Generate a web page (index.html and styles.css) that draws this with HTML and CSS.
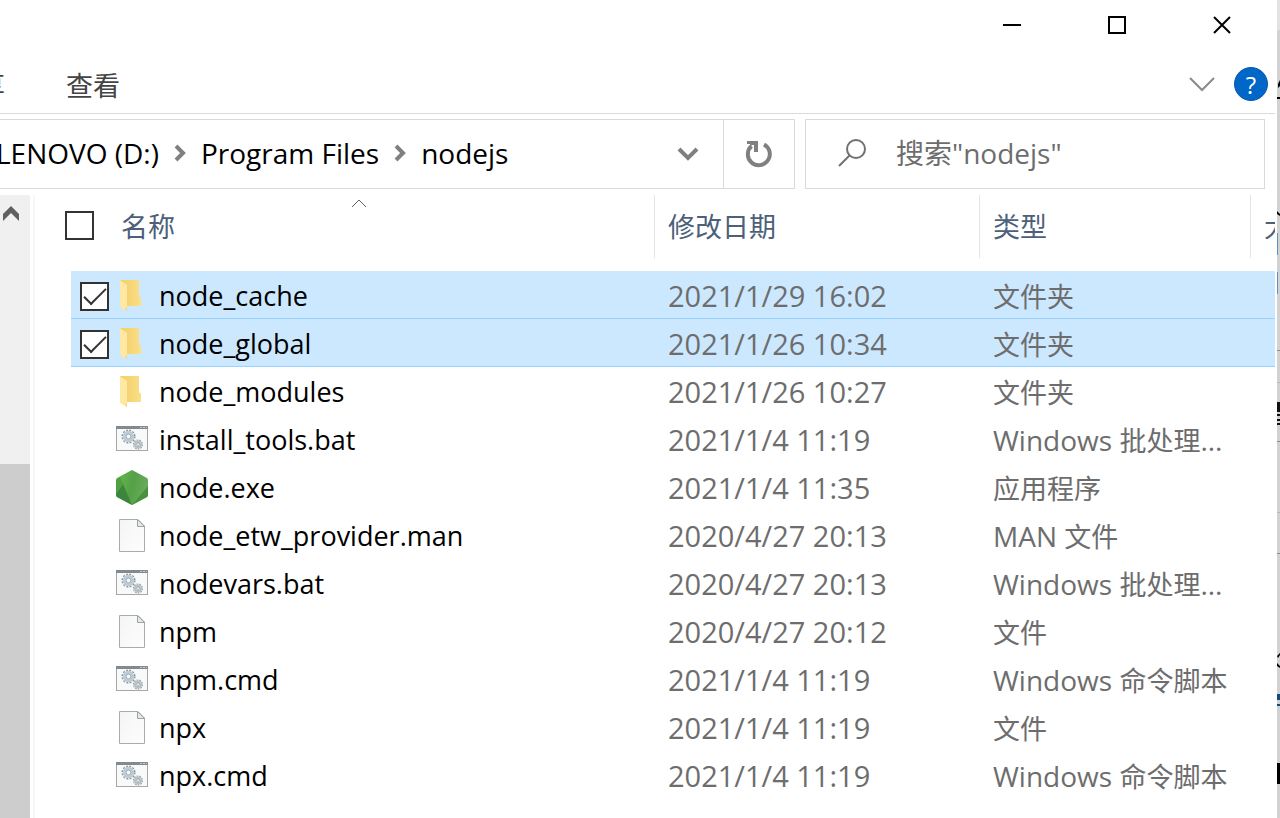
FILE: index.html
```
<!DOCTYPE html>
<html lang="zh-CN">
<head>
    <meta charset="UTF-8">
    <meta name="viewport" content="width=device-width, initial-scale=1.0">
    <title>nodejs</title>
    <link rel="stylesheet" href="styles.css">
</head>
<body>
    <!-- Shared icons -->
    <svg class="icon-defs" width="0" height="0" aria-hidden="true">
        <defs>
            <linearGradient id="folder-fill" x1="0" x2="1">
                <stop offset="0" stop-color="#f0cd69"/>
                <stop offset="1" stop-color="#fbdf85"/>
            </linearGradient>
            <linearGradient id="node-fill" x1="0" x2="1" y1="0.3" y2="0.6">
                <stop offset="0" stop-color="#66b848"/>
                <stop offset="0.5" stop-color="#55a048"/>
                <stop offset="1" stop-color="#6cad5c"/>
            </linearGradient>
            <linearGradient id="page-fill" x1="0" x2="1" y1="0" y2="1">
                <stop offset="0" stop-color="#f4f5f6"/>
                <stop offset="1" stop-color="#fdfdfd"/>
            </linearGradient>
        </defs>
        <symbol id="folder" viewBox="0 0 34 36">
            <path d="M5 2H24V18L26 20V28H5Z" fill="url(#folder-fill)"/>
            <path d="M5 2L12 7V33L5 29Z" fill="#ffe9a2"/>
            <path d="M12 28V33L10 32Z" fill="#f5d67c"/>
        </symbol>
        <symbol id="script" viewBox="0 0 34 36">
            <rect x="1.500" y="4.500" width="31" height="24" fill="#f8f9f9" stroke="#a3a7aa"/>
            <path d="M1 4H33V7H1Z" fill="#85898c"/>
            <path d="M25 5.500H32" stroke="#c9cccd" stroke-dasharray="2 1"/>
            <circle cx="13.500" cy="14.500" r="6.300" fill="none" stroke="#8b9aa5" stroke-width="1.500" stroke-dasharray="1.900 1.400"/>
            <circle cx="13.500" cy="14.500" r="4" fill="#f8f9f9" stroke="#bfccd5" stroke-width="3.400"/>
            <circle cx="13.500" cy="14.500" r="2.300" fill="#f8f9f9" stroke="#92a0aa" stroke-width="0.800"/>
            <circle cx="23" cy="22.500" r="4.400" fill="none" stroke="#8b979f" stroke-width="1.200" stroke-dasharray="1.500 1.200"/>
            <circle cx="23" cy="22.500" r="2.800" fill="#f8f9f9" stroke="#b6c1c8" stroke-width="2.400"/>
            <circle cx="23" cy="22.500" r="1.300" fill="#f8f9f9" stroke="#92a0aa" stroke-width="0.700"/>
        </symbol>
        <symbol id="node" viewBox="0 0 34 36">
            <path d="M17 0L32 8Q33 9 33 10V25Q33 26 32 27L17 35L2 27Q1 26 1 25V10Q1 9 2 8Z" fill="url(#node-fill)"/>
            <path d="M1 24L8 14L17 35L2 27Q1 26 1 25Z" fill="#3c853d"/>
            <path d="M5 7L1 10V24L8 14Z" fill="#4f9f45"/>
            <path d="M17 35L33 16V25Q33 26 32 27Z" fill="#48923f"/>
        </symbol>
        <symbol id="page" viewBox="0 0 34 36">
            <path d="M4.500 1.500H23L29.500 8V33.500H4.500Z" fill="url(#page-fill)" stroke="#a9abad"/>
            <path d="M22.500 1.500V8.500H29.500Z" fill="#e6e8e9" stroke="#a0a2a4"/>
        </symbol>
    </svg>

    <div class="desktop">
        <main class="window">
            <header class="titlebar">
                <button type="button" aria-label="最小化">
                    <svg width="20" height="20" viewBox="0 0 20 20"><path d="M1 10H19" stroke="#000" stroke-width="2"/></svg>
                </button>
                <button type="button" aria-label="最大化">
                    <svg width="20" height="20" viewBox="0 0 20 20"><rect x="2" y="2" width="16" height="16" fill="none" stroke="#000" stroke-width="2"/></svg>
                </button>
                <button type="button" aria-label="关闭">
                    <svg width="20" height="20" viewBox="0 0 20 20"><path d="M2 2L18 18M18 2L2 18" stroke="#000" stroke-width="2"/></svg>
                </button>
            </header>

            <nav class="ribbon">
                <a class="tab" href="#">共享</a>
                <a class="tab" href="#">查看</a>
                <button type="button" class="expand" aria-label="展开功能区">
                    <svg width="26" height="16" viewBox="0 0 26 16"><path d="M1 2L13 14L25 2" fill="none" stroke="#8a8a8a" stroke-width="2"/></svg>
                </button>
                <button type="button" class="help" aria-label="帮助">?</button>
            </nav>

            <div class="location">
                <div class="address">
                    <div class="crumbs">
                        <a href="#">LENOVO (D:)</a>
                        <svg width="12" height="18" viewBox="0 0 12 18"><path d="M2 2L9 9L2 16" fill="none" stroke="#808080" stroke-width="4"/></svg>
                        <a href="#">Program Files</a>
                        <svg width="12" height="18" viewBox="0 0 12 18"><path d="M2 2L9 9L2 16" fill="none" stroke="#808080" stroke-width="4"/></svg>
                        <a href="#">nodejs</a>
                    </div>
                    <button type="button" class="history" aria-label="以前的位置">
                        <svg width="22" height="16" viewBox="0 0 22 16"><path d="M2 3L11 12L20 3" fill="none" stroke="#808080" stroke-width="4"/></svg>
                    </button>
                    <button type="button" class="refresh" aria-label="刷新">
                        <svg width="28" height="28" viewBox="0 0 28 28">
                            <path d="M19 4.500A11 11 0 1 1 6.500 6" fill="none" stroke="#808080" stroke-width="4"/>
                            <path d="M2 1H13V12H9V5H7L5 7V4H2Z" fill="#808080"/>
                        </svg>
                    </button>
                </div>
                <label class="search">
                    <svg width="30" height="30" viewBox="0 0 30 30"><circle cx="19" cy="11" r="9" fill="none" stroke="#707070" stroke-width="2"/><path d="M13 17L2 28" stroke="#707070" stroke-width="2"/></svg>
                    <input type="text" placeholder='搜索"nodejs"' aria-label="搜索">
                </label>
            </div>

            <div class="content">
                <div class="scrollbar">
                    <svg width="20" height="16" viewBox="0 0 20 16"><path d="M10 0L18 8V15L10 7L2 15V8Z" fill="#606060"/></svg>
                    <div class="thumb"></div>
                </div>
                <div class="files">
                    <table>
                        <colgroup>
                            <col class="col-name">
                            <col class="col-date">
                            <col class="col-type">
                            <col>
                        </colgroup>
                        <thead>
                            <tr>
                                <th>
                                    <div class="head head-name">
                                        <input type="checkbox" aria-label="全选">
                                        <span>名称</span>
                                        <svg class="sort" width="16" height="9" viewBox="0 0 16 9"><path d="M1 8L8 1L15 8" fill="none" stroke="#606060"/></svg>
                                    </div>
                                </th>
                                <th><div class="head">修改日期</div></th>
                                <th><div class="head">类型</div></th>
                                <th><div class="head">大小</div></th>
                            </tr>
                        </thead>
                        <tbody>
                            <tr class="selected">
                                <td><label class="file"><input type="checkbox" checked><svg><use href="#folder"/></svg>node_cache</label></td>
                                <td class="date">2021/1/29 16:02</td>
                                <td><span class="zh">文件夹</span></td>
                                <td></td>
                            </tr>
                            <tr class="selected">
                                <td><label class="file"><input type="checkbox" checked><svg><use href="#folder"/></svg>node_global</label></td>
                                <td class="date">2021/1/26 10:34</td>
                                <td><span class="zh">文件夹</span></td>
                                <td></td>
                            </tr>
                            <tr>
                                <td><div class="file"><svg><use href="#folder"/></svg>node_modules</div></td>
                                <td class="date">2021/1/26 10:27</td>
                                <td><span class="zh">文件夹</span></td>
                                <td></td>
                            </tr>
                            <tr>
                                <td><div class="file"><svg><use href="#script"/></svg>install_tools.bat</div></td>
                                <td class="date">2021/1/4 11:19</td>
                                <td>Windows <span class="zh">批处理</span>...</td>
                                <td></td>
                            </tr>
                            <tr>
                                <td><div class="file"><svg><use href="#node"/></svg>node.exe</div></td>
                                <td class="date">2021/1/4 11:35</td>
                                <td><span class="zh">应用程序</span></td>
                                <td></td>
                            </tr>
                            <tr>
                                <td><div class="file"><svg><use href="#page"/></svg>node_etw_provider.man</div></td>
                                <td class="date">2020/4/27 20:13</td>
                                <td>MAN <span class="zh">文件</span></td>
                                <td></td>
                            </tr>
                            <tr>
                                <td><div class="file"><svg><use href="#script"/></svg>nodevars.bat</div></td>
                                <td class="date">2020/4/27 20:13</td>
                                <td>Windows <span class="zh">批处理</span>...</td>
                                <td></td>
                            </tr>
                            <tr>
                                <td><div class="file"><svg><use href="#page"/></svg>npm</div></td>
                                <td class="date">2020/4/27 20:12</td>
                                <td><span class="zh">文件</span></td>
                                <td></td>
                            </tr>
                            <tr>
                                <td><div class="file"><svg><use href="#script"/></svg>npm.cmd</div></td>
                                <td class="date">2021/1/4 11:19</td>
                                <td>Windows <span class="zh">命令脚本</span></td>
                                <td></td>
                            </tr>
                            <tr>
                                <td><div class="file"><svg><use href="#page"/></svg>npx</div></td>
                                <td class="date">2021/1/4 11:19</td>
                                <td><span class="zh">文件</span></td>
                                <td></td>
                            </tr>
                            <tr>
                                <td><div class="file"><svg><use href="#script"/></svg>npx.cmd</div></td>
                                <td class="date">2021/1/4 11:19</td>
                                <td>Windows <span class="zh">命令脚本</span></td>
                                <td></td>
                            </tr>
                        </tbody>
                    </table>
                </div>
            </div>
        </main>

        <!-- Edge of the window behind -->
        <svg class="behind" width="3" height="818" viewBox="0 0 3 818" aria-hidden="true">
            <path d="M0 0H3V30H0Z" fill="#e2e2e2"/>
            <path d="M1 84L3 80V86L1 88ZM0 97H3V99H0ZM0 211L3 214V216L0 214Z" fill="#000"/>
            <path d="M0 233H1V255H0ZM0 272H1V294H0Z" fill="#5b93c9"/>
            <path d="M0 350H3V351H0ZM0 441H3V442H0ZM0 553H3V554H0Z" fill="#8c8c8c"/>
            <path d="M0 382H3V383H0ZM0 512H3V513H0Z" fill="#b8b8b8"/>
            <path d="M0 402H3V412H0ZM0 414H3V416H0ZM0 419H3V421H0ZM0 423H3V425H0Z" fill="#111"/>
            <path d="M0 656L3 653V655L1 658ZM0 663L3 666V668L0 666Z" fill="#000"/>
            <path d="M0 694H3V700H0ZM0 704H3V706H0Z" fill="#174a7a"/>
            <path d="M0 763H3V784H0Z" fill="#000"/>
        </svg>
    </div>
</body>
</html>
```

FILE: styles.css
```
* {
    box-sizing: border-box;
}
body {
    margin: 0;
    font-family: "Open Sans", "Noto Sans CJK SC", sans-serif;
    font-size: 28px;
    color: #000;
    background-color: #fff;
}
a {
    color: inherit;
    text-decoration: none;
}
button {
    display: flex;
    align-items: center;
    justify-content: center;
    padding: 0;
    border: none;
    background: none;
    font: inherit;
}
svg {
    flex: none;
}
.icon-defs {
    position: absolute;
}
.desktop {
    display: flex;
    height: 100vh;
    overflow: hidden;
}
.window {
    flex: 1;
    min-width: 0;
    display: flex;
    flex-direction: column;
    padding-right: 2px;
}
.behind {
    background-color: #d2d2d2;
}

/* Title bar and ribbon */
.titlebar {
    display: flex;
    justify-content: flex-end;
    height: 50px;
    padding: 0 1px 1px 0;
}
.titlebar button {
    width: 105px;
}
.ribbon {
    display: flex;
    align-items: center;
    height: 64px;
    padding: 5px 7px 0 0;
    border-bottom: 1px solid #dadbdc;
    overflow: hidden;
}
.tab {
    margin-right: 61px;
    font-size: 27px;
    color: #444;
}
.tab:first-child {
    margin-left: -49px;
}
.expand {
    margin-left: auto;
}
.help {
    width: 34px;
    height: 34px;
    margin-left: 19px;
    border: 1px solid #0a5cab;
    border-radius: 50%;
    background-color: #0067c8;
    color: #fff;
    font-size: 24px;
}

/* Address bar and search box */
.location {
    display: flex;
    gap: 10px;
    padding: 5px 10px 6px 0;
}
.address {
    flex: 1;
    min-width: 0;
    display: flex;
    height: 70px;
    border: 1px solid #d9d9d9;
    border-left: none;
}
.crumbs {
    flex: 1;
    display: flex;
    align-items: center;
    gap: 15px;
    margin-left: -4px;
    padding-bottom: 2px;
    white-space: nowrap;
}
.history {
    width: 70px;
}
.refresh {
    width: 71px;
    border-left: 1px solid #d9d9d9;
}
.search {
    width: 460px;
    display: flex;
    align-items: center;
    gap: 29px;
    height: 70px;
    padding: 0 0 2px 31px;
    border: 1px solid #d9d9d9;
}
.search input {
    flex: 1;
    min-width: 0;
    padding: 0;
    border: none;
    outline: none;
    font: inherit;
}
.search input::placeholder {
    color: #6d6d6d;
    opacity: 1;
}

/* File list */
.content {
    flex: 1;
    min-height: 0;
    display: flex;
}
.scrollbar {
    width: 30px;
    display: flex;
    flex-direction: column;
    padding: 11px 0 0 1px;
    background-color: #f0f0f0;
}
.thumb {
    flex: 1;
    margin: 242px 0 0 -1px;
    background-color: #cdcdcd;
}
.files {
    flex: 1;
    min-width: 0;
    margin-left: 3px;
    padding-left: 36px;
    border-left: 2px solid #f7f7f7;
    overflow: hidden;
}
table {
    width: 100%;
    table-layout: fixed;
    border-collapse: collapse;
}
.col-name {
    width: 583px;
}
.col-date {
    width: 325px;
}
.col-type {
    width: 271px;
}
th {
    height: 76px;
    padding: 0;
    font-size: 27px;
    font-weight: normal;
    text-align: left;
    vertical-align: top;
    color: #4c607a;
}
.head {
    display: flex;
    align-items: center;
    height: 63px;
    padding: 0 0 2px 13px;
    border-left: 1px solid #e5e5e5;
    white-space: nowrap;
    overflow: hidden;
}
.head-name {
    position: relative;
    gap: 27px;
    margin-left: -6px;
    padding-left: 0;
    border-left: none;
}
.sort {
    position: absolute;
    top: 4px;
    left: 50%;
    margin-left: -9px;
}
td {
    height: 48px;
    padding: 2px 0 0 14px;
    color: #6d6d6d;
    line-height: 36px;
    white-space: nowrap;
    overflow: hidden;
}
td:first-child {
    padding-left: 9px;
    color: #000;
    font-size: 27px;
}
td:last-child {
    padding: 0;
}
.date {
    font-size: 29px;
}
.zh {
    font-size: 27px;
}
.selected {
    background-color: #cce8ff;
    box-shadow: inset 0 -1px #99d1ff;
}
.file {
    display: flex;
    align-items: center;
}
.file svg {
    width: 34px;
    height: 36px;
    margin: 0 10px 0 35px;
}
.file input + svg {
    margin-left: 6px;
}
input[type="checkbox"] {
    appearance: none;
    width: 29px;
    height: 29px;
    margin: 0;
    border: 2px solid #333;
    background-color: #fff;
    display: grid;
    place-items: center;
}
input[type="checkbox"]:checked::before {
    content: "";
    width: 20px;
    height: 9px;
    border: solid #333;
    border-width: 0 0 2px 2px;
    transform: translateY(-3px) rotate(-45deg);
}
```
